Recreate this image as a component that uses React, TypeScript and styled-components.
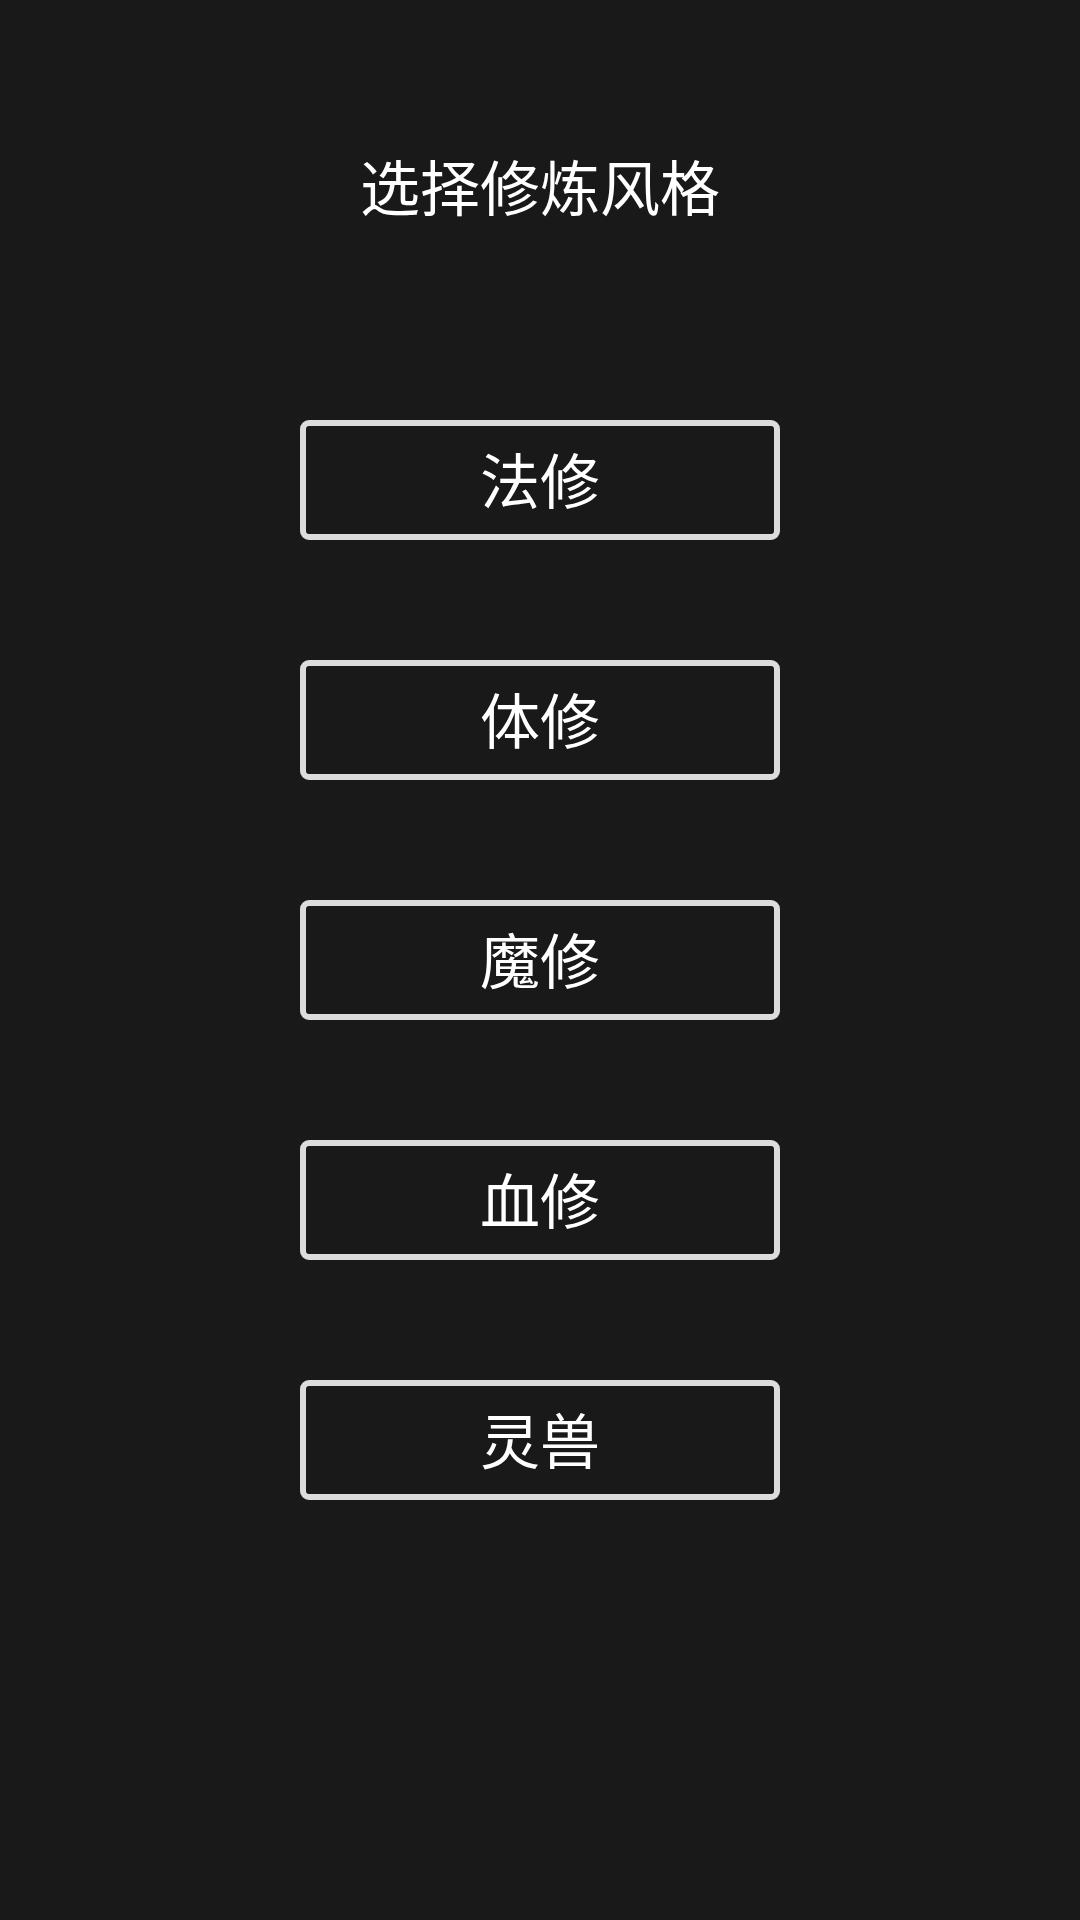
import React from 'react';
import type { FC } from 'react';
import styled, { createGlobalStyle } from 'styled-components';

const STYLES = ['法修', '体修', '魔修', '血修', '灵兽'];

const GlobalStyle = createGlobalStyle`
  html, body {
    margin: 0;
    padding: 0;
    background: #191919;
  }
  body {
    font-family: 'Noto Sans CJK SC', 'Noto Sans', sans-serif;
  }
`;

const App: FC = () => (
  <>
    <GlobalStyle />
    <Page>
      <Title>选择修炼风格</Title>
      <ButtonList>
        {STYLES.map((name) => (
          <StyleButton key={name} type="button">
            {name}
          </StyleButton>
        ))}
      </ButtonList>
    </Page>
  </>
);

export default App;

const Page = styled.div`
  min-height: 1920px;
  box-sizing: border-box;
  padding-top: 145px;
  display: flex;
  flex-direction: column;
  align-items: center;
  background: #191919;
`;

const Title = styled.h1`
  margin: 0;
  font-size: 60px;
  line-height: 80px;
  font-weight: 400;
  color: #ffffff;
`;

const ButtonList = styled.div`
  margin-top: 195px;
  display: flex;
  flex-direction: column;
  gap: 120px;
`;

const StyleButton = styled.button`
  width: 480px;
  height: 120px;
  box-sizing: border-box;
  border: 6px solid #dcdcdc;
  border-radius: 9px;
  background: #191919;
  color: #ffffff;
  font-family: 'Noto Sans CJK SC', 'Noto Sans', sans-serif;
  font-size: 60px;
  line-height: 1;
  padding: 0 0 5px;
  cursor: pointer;
  display: flex;
  align-items: center;
  justify-content: center;
`;
